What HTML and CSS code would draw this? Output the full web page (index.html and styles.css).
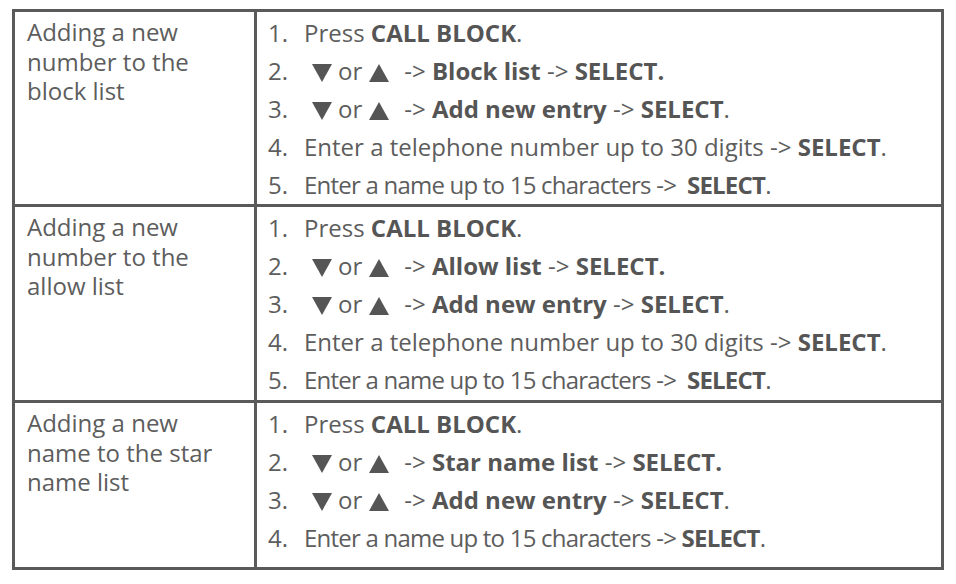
FILE: index.html
```html
<!DOCTYPE html>
<html>
<head>
<meta charset="utf-8">
<link rel="stylesheet" href="styles.css">
</head>
<body>
<div class="grid">
  <div class="cell label">Adding a new number to the block list</div>
  <div class="cell steps">
    <div class="step"><span class="num">1.</span><span>Press <b>CALL BLOCK</b>.</span></div>
    <div class="step"><span class="num">2.</span><span><svg class="tri down" viewBox="0 0 20 18"><path d="M0 0H20L10 18Z"/></svg>or<svg class="tri up" viewBox="0 0 20 18"><path d="M10 0L20 18H0Z"/></svg>-&gt; <b>Block list</b> -&gt; <b>SELECT.</b></span></div>
    <div class="step"><span class="num">3.</span><span><svg class="tri down" viewBox="0 0 20 18"><path d="M0 0H20L10 18Z"/></svg>or<svg class="tri up" viewBox="0 0 20 18"><path d="M10 0L20 18H0Z"/></svg>-&gt; <b>Add new entry</b> -&gt; <b>SELECT</b>.</span></div>
    <div class="step"><span class="num">4.</span><span>Enter a telephone number up to 30 digits -&gt; <b>SELECT</b>.</span></div>
    <div class="step"><span class="num">5.</span><span class="tight">Enter a name up to 15 characters -&gt;&nbsp; <b>SELECT</b>.</span></div>
  </div>
  <div class="cell label">Adding a new number to the allow list</div>
  <div class="cell steps">
    <div class="step"><span class="num">1.</span><span>Press <b>CALL BLOCK</b>.</span></div>
    <div class="step"><span class="num">2.</span><span><svg class="tri down" viewBox="0 0 20 18"><path d="M0 0H20L10 18Z"/></svg>or<svg class="tri up" viewBox="0 0 20 18"><path d="M10 0L20 18H0Z"/></svg>-&gt; <b>Allow list</b> -&gt; <b>SELECT.</b></span></div>
    <div class="step"><span class="num">3.</span><span><svg class="tri down" viewBox="0 0 20 18"><path d="M0 0H20L10 18Z"/></svg>or<svg class="tri up" viewBox="0 0 20 18"><path d="M10 0L20 18H0Z"/></svg>-&gt; <b>Add new entry</b> -&gt; <b>SELECT</b>.</span></div>
    <div class="step"><span class="num">4.</span><span>Enter a telephone number up to 30 digits -&gt; <b>SELECT</b>.</span></div>
    <div class="step"><span class="num">5.</span><span class="tight">Enter a name up to 15 characters -&gt;&nbsp; <b>SELECT</b>.</span></div>
  </div>
  <div class="cell label">Adding a new name to the star name list</div>
  <div class="cell steps">
    <div class="step"><span class="num">1.</span><span>Press <b>CALL BLOCK</b>.</span></div>
    <div class="step"><span class="num">2.</span><span><svg class="tri down" viewBox="0 0 20 18"><path d="M0 0H20L10 18Z"/></svg>or<svg class="tri up" viewBox="0 0 20 18"><path d="M10 0L20 18H0Z"/></svg>-&gt; <b>Star name list</b> -&gt; <b>SELECT.</b></span></div>
    <div class="step"><span class="num">3.</span><span><svg class="tri down" viewBox="0 0 20 18"><path d="M0 0H20L10 18Z"/></svg>or<svg class="tri up" viewBox="0 0 20 18"><path d="M10 0L20 18H0Z"/></svg>-&gt; <b>Add new entry</b> -&gt; <b>SELECT</b>.</span></div>
    <div class="step"><span class="num">4.</span><span class="tight">Enter a name up to 15 characters -&gt; <b>SELECT</b>.</span></div>
  </div>
</div>
</body>
</html>
```

FILE: styles.css
```css
html, body {
  margin: 0;
  background: #ffffff;
}
body {
  padding: 9px 0 0 12px;
  font-family: "Open Sans", "DejaVu Sans", sans-serif;
  color: #5d5d5d;
}
.grid {
  display: grid;
  width: 932px;
  box-sizing: border-box;
  grid-template-columns: 242px 687px;
  grid-template-rows: 195px 196px 167px;
  border-top: 3px solid #5a5a5a;
  border-left: 3px solid #5a5a5a;
}
.cell {
  border-right: 3px solid #5a5a5a;
  border-bottom: 3px solid #5a5a5a;
}
.label {
  font-size: 24px;
  line-height: 29.5px;
  padding: 5px 20px 0 12px;
}
.steps {
  padding: 1px 0 0 11px;
  font-size: 24px;
  letter-spacing: 0;
}
.step {
  display: flex;
  height: 38px;
  align-items: center;
  white-space: nowrap;
}
.num {
  width: 36px;
  flex: none;
}
b {
  font-weight: 700;
  color: #555555;
}
.tight {
  letter-spacing: -0.78px;
}
.tri {
  width: 20px;
  height: 18px;
  fill: #555555;
  vertical-align: -2px;
}
.tri.down {
  margin: 0 6px 0 8px;
}
.tri.up {
  margin: 0 15px 0 7px;
}
```
